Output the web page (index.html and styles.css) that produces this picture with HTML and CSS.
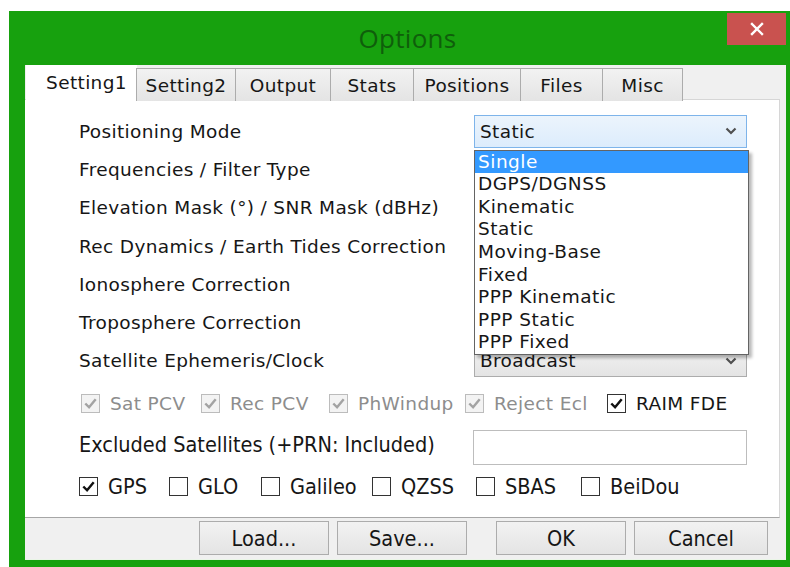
FILE: index.html
```html
<!DOCTYPE html>
<html lang="en">
<head>
<meta charset="utf-8">
<title>Options</title>
<link rel="stylesheet" href="styles.css">
</head>
<body>
<div class="window">
  <div class="titlebar">
    <span></span>
    <div class="title">Options</div>
    <button class="close" aria-label="Close">
      <svg width="14" height="14" viewBox="0 0 14 14"><path d="M2 2 L12 12 M12 2 L2 12" stroke="#fff" stroke-width="2.4" stroke-linecap="square"/></svg>
    </button>
  </div>

  <div class="client">
    <div class="tabs">
      <div class="tab active">Setting1</div>
      <div class="tab">Setting2</div>
      <div class="tab">Output</div>
      <div class="tab">Stats</div>
      <div class="tab">Positions</div>
      <div class="tab">Files</div>
      <div class="tab">Misc</div>
    </div>

    <div class="panel">
      <div class="rows">
        <div class="row">
          <span class="label">Positioning Mode</span>
          <div class="combo-wrap">
            <div class="combo hot">
              <span>Static</span>
              <svg class="chev" width="12" height="8" viewBox="0 0 12 8"><path d="M1.5 1.5 L6 6 L10.5 1.5" fill="none" stroke="#505050" stroke-width="2.2"/></svg>
            </div>
            <ul class="list">
              <li class="sel">Single</li>
              <li>DGPS/DGNSS</li>
              <li>Kinematic</li>
              <li>Static</li>
              <li>Moving-Base</li>
              <li>Fixed</li>
              <li>PPP Kinematic</li>
              <li>PPP Static</li>
              <li>PPP Fixed</li>
            </ul>
          </div>
        </div>
        <div class="row"><span class="label">Frequencies / Filter Type</span><div class="combo"></div></div>
        <div class="row"><span class="label">Elevation Mask (°) / SNR Mask (dBHz)</span><div class="combo"></div></div>
        <div class="row"><span class="label">Rec Dynamics / Earth Tides Correction</span><div class="combo"></div></div>
        <div class="row"><span class="label">Ionosphere Correction</span><div class="combo"></div></div>
        <div class="row"><span class="label">Troposphere Correction</span><div class="combo"></div></div>
        <div class="row">
          <span class="label">Satellite Ephemeris/Clock</span>
          <div class="combo">
            <span>Broadcast</span>
            <svg class="chev" width="12" height="8" viewBox="0 0 12 8"><path d="M1.5 1.5 L6 6 L10.5 1.5" fill="none" stroke="#505050" stroke-width="2.2"/></svg>
          </div>
        </div>
      </div>

      <div class="checks opts">
        <label class="check off"><span class="box"><svg viewBox="0 0 18 18"><path d="M3.5 9 L7.5 13 L14.5 4.5" fill="none" stroke-width="2.6"/></svg></span>Sat PCV</label>
        <label class="check off"><span class="box"><svg viewBox="0 0 18 18"><path d="M3.5 9 L7.5 13 L14.5 4.5" fill="none" stroke-width="2.6"/></svg></span>Rec PCV</label>
        <label class="check off"><span class="box"><svg viewBox="0 0 18 18"><path d="M3.5 9 L7.5 13 L14.5 4.5" fill="none" stroke-width="2.6"/></svg></span>PhWindup</label>
        <label class="check off"><span class="box"><svg viewBox="0 0 18 18"><path d="M3.5 9 L7.5 13 L14.5 4.5" fill="none" stroke-width="2.6"/></svg></span>Reject Ecl</label>
        <label class="check"><span class="box"><svg viewBox="0 0 18 18"><path d="M3.5 9 L7.5 13 L14.5 4.5" fill="none" stroke-width="2.6"/></svg></span>RAIM FDE</label>
      </div>

      <div class="row excl">
        <span class="label narrow">Excluded Satellites (+PRN: Included)</span>
        <div class="textbox"></div>
      </div>

      <div class="checks systems narrow">
        <label class="check"><span class="box"><svg viewBox="0 0 18 18"><path d="M3.5 9 L7.5 13 L14.5 4.5" fill="none" stroke-width="2.6"/></svg></span>GPS</label>
        <label class="check"><span class="box"></span>GLO</label>
        <label class="check"><span class="box"></span>Galileo</label>
        <label class="check"><span class="box"></span>QZSS</label>
        <label class="check"><span class="box"></span>SBAS</label>
        <label class="check"><span class="box"></span>BeiDou</label>
      </div>
    </div>

    <div class="footer">
      <button class="btn">Load...</button>
      <button class="btn">Save...</button>
      <button class="btn gap">OK</button>
      <button class="btn">Cancel</button>
    </div>
  </div>
</div>
</body>
</html>
```

FILE: styles.css
```css
* { box-sizing: border-box; }

body {
  margin: 0;
  background: #ffffff;
  font-family: "DejaVu Sans", "Liberation Sans", sans-serif;
  font-size: 18.5px;
  letter-spacing: 0.35px;
  color: #161616;
}

/* window frame */
.window {
  margin: 11px 0 0 9px;
  width: 781px;
  height: 556px;
  background: #17a10e;
  padding: 0 4px 7px 16px;
  display: flex;
  flex-direction: column;
}

.titlebar {
  height: 54px;
  display: grid;
  grid-template-columns: 1fr auto 1fr;
  align-items: start;
}

.title {
  font-family: "Open Sans", "Noto Sans", sans-serif;
  font-size: 26px;
  letter-spacing: 0.3px;
  color: #0f5e0b;
  padding-top: 9px;
  padding-left: 4px;
}

.close {
  justify-self: end;
  margin-top: 2px;
  width: 59px;
  height: 32px;
  border: none;
  background: #c9524f;
  display: flex;
  align-items: center;
  justify-content: center;
  padding: 0;
}

/* client area */
.client {
  flex: 1;
  background: #f0f0f0;
  display: flex;
  flex-direction: column;
  border-bottom: 1px solid #e9f5e6;
}

.tabs {
  height: 35px;
  display: grid;
  grid-template-columns: 110px 99px 95px 83px 107px 82px 80px;
  align-items: end;
  padding-left: 2px;
  margin-bottom: -1px;
  position: relative;
  z-index: 1;
}

.tab {
  height: 33px;
  border: 1px solid #acacac;
  border-bottom: none;
  margin-left: -1px;
  background: linear-gradient(#f2f2f2, #e4e4e4);
  display: flex;
  align-items: center;
  justify-content: center;
  padding-bottom: 0;
}

.tab.active {
  height: 36px;
  background: #ffffff;
  border-color: #ffffff;
  padding: 0 0 2px 10px;
}

.panel {
  margin-right: 6px;
  height: 419px;
  background: #ffffff;
  border: 1px solid #d6d6d6;
  border-left: none;
  border-bottom: 1px solid #a6a6a6;
  padding: 12px 0 0 54px;
  display: flex;
  flex-direction: column;
}

.rows {
  display: flex;
  flex-direction: column;
}

.row {
  height: 38.3px;
  display: grid;
  grid-template-columns: 395px 273px;
  align-items: center;
}

.label { white-space: nowrap; }

.combo-wrap { position: relative; }

.combo {
  height: 33px;
  border: 1px solid #acacac;
  background: linear-gradient(#f2f2f2, #e4e4e4);
  display: flex;
  align-items: center;
  justify-content: space-between;
  padding: 0 9px 0 5px;
}

.combo.hot {
  border-color: #7eb4ea;
  background: linear-gradient(#ecf4fc, #dcecfc);
}

.chev { flex: none; }

/* open drop-down list of the first combo */
.list {
  position: absolute;
  left: 0;
  top: 35px;
  width: 275px;
  margin: 0;
  padding: 0;
  list-style: none;
  background: #ffffff;
  border: 1px solid #646464;
  box-shadow: 3px 3px 3px rgba(0, 0, 0, 0.28);
  z-index: 5;
}

.list li {
  height: 22.6px;
  line-height: 22.6px;
  padding-left: 3px;
  white-space: nowrap;
  letter-spacing: 0.5px;
}

.list li.sel {
  background: #3399ff;
  color: #ffffff;
}

/* check boxes */
.checks {
  display: grid;
  align-items: center;
}

.opts {
  height: 42px;
  margin-top: 2px;
  grid-template-columns: 120px 128px 136px 142px auto;
  padding-left: 2px;
}

.systems {
  height: 42px;
  grid-template-columns: 90px 92px 111px 104px 105px auto;
}

.check {
  display: flex;
  align-items: center;
  gap: 10px;
  white-space: nowrap;
}

.box {
  width: 19px;
  height: 19px;
  border: 1px solid #333333;
  background: #ffffff;
  display: flex;
  flex: none;
}

.box svg { width: 17px; height: 17px; stroke: #111111; }

.check.off { color: #8d8d8d; }
.check.off .box { border-color: #bcbcbc; background: #f3f3f3; }
.check.off .box svg { stroke: #a3a3a3; }

.excl { height: 41px; }

.textbox {
  height: 35px;
  margin-top: 6px;
  margin-left: -1px;
  width: 274px;
  border: 1px solid #bdbdbd;
  background: #ffffff;
}

.narrow {
  font-family: "DejaVu Sans Condensed", "DejaVu Sans", sans-serif;
  font-stretch: condensed;
  font-size: 21.5px;
  letter-spacing: 0;
}

/* button bar */
.footer {
  flex: 1;
  display: flex;
  align-items: flex-start;
  padding: 3px 0 0 174px;
  gap: 8px;
}

.btn {
  width: 130px;
  height: 34px;
  border: 1px solid #acacac;
  background: linear-gradient(#f2f2f2, #e4e4e4);
  font-family: "DejaVu Sans Condensed", "DejaVu Sans", sans-serif;
  font-stretch: condensed;
  font-size: 21.5px;
  color: #161616;
  padding: 0;
}

.btn.gap { margin-left: 21px; }
.btn:last-child { width: 134px; }
```
